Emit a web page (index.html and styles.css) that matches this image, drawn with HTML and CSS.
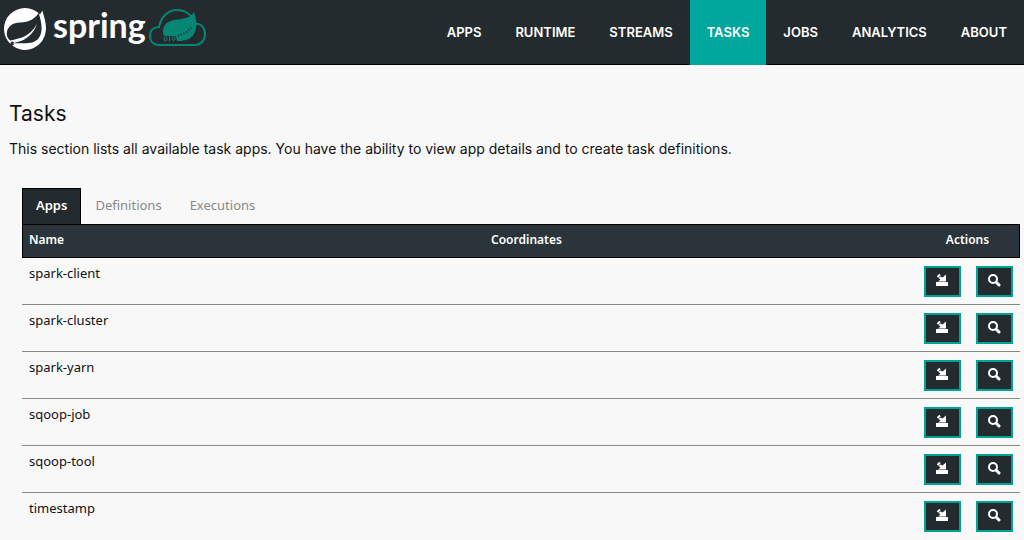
FILE: index.html
```html
<!DOCTYPE html>
<html lang="en">

<head>
    <meta charset="UTF-8">
    <meta name="viewport" content="width=device-width, initial-scale=1.0">
    <title>Tasks</title>
    <link rel="stylesheet" href="styles.css">
</head>

<body>
    <!-- shared icons -->
    <svg class="sprite" aria-hidden="true">
        <symbol id="icon-launch" viewBox="0 0 14 14">
            <path d="M1 9h12v4H1z M3 8.500L5.500 6.500 3.500 5 5.500 3.500 7.500 4.500 11 1.500V8.500z" />
            <path d="M2.500 4L5 1.500" fill="none" stroke="currentColor" stroke-width="2" />
        </symbol>
        <symbol id="icon-search" viewBox="0 0 14 14">
            <circle cx="6" cy="6" r="4" fill="none" stroke="currentColor" stroke-width="2" />
            <path d="M9.500 9.500l2.500 2.500" stroke="currentColor" stroke-width="3" stroke-linecap="round" />
        </symbol>
    </svg>

    <header class="navbar">
        <a class="brand" href="#" aria-label="spring">
            <svg width="210" height="56" viewBox="0 0 210 56">
                <path transform="translate(4 8) scale(1.75)" fill="#fff" d="M21.8537 1.4158a10.4504 10.4504 0 0 1-1.284 2.2471A11.9666 11.9666 0 1 0 3.8518 20.7757l.4445.3951a11.9543 11.9543 0 0 0 19.6316-8.2971c.3457-3.0126-.568-6.8649-2.0742-11.458zM5.5805 20.8745a1.0174 1.0174 0 1 1-.1482-1.4323 1.0396 1.0396 0 0 1 .1482 1.4323zm14.1991-3.5806c-2.9385 3.9013-9.2494 2.5928-13.2763 2.8149 0 0-.7163.0395-1.4323.158 0 0 .2716-.1235.6174-.247 2.8397-.9877 4.1732-1.1853 5.9018-2.0742 3.2349-1.6545 6.4698-5.2844 7.1118-9.0379-1.2347 3.6053-4.9881 6.7165-8.3959 7.9759-2.3459.8643-6.5685 1.7039-6.5685 1.7039l-.1729-.0988c-2.8645-1.4076-2.9632-7.6304 2.2718-9.6306 2.2964-.889 4.4696-.395 6.9637-.9877 2.6422-.6174 5.7042-2.5929 6.939-5.1855 1.3829 4.1732 3.062 10.643.0493 14.6087z" />
                <text class="brand-text" x="53" y="38">spring</text>
                <path d="M159 45c-6 0-9-4-9-9 0-6 4-9 9-9 2-10 9-17 18-17 8 0 14 3 18 14 6-1 10 4 10 10s-4 11-10 11z" fill="none" stroke="#068675" stroke-width="2" />
                <path d="M194 12c5 14 2 25-8 28-3 1-6 1-9 1l-1-5-12 0c-3-8 1-14 10-16 9-1 17-2 20-8z" fill="#068675" />
                <!-- binary digits on the leaf edge -->
                <g fill="none" stroke="#068675">
                    <ellipse cx="165.500" cy="39" rx="1.500" ry="2" />
                    <path d="M169.500 36.500v5" />
                    <ellipse cx="173.500" cy="38.500" rx="1.500" ry="2" />
                </g>
                <path d="M178 36c5-2 10-4 14-9" fill="none" stroke="#242b2e" stroke-width="2" stroke-dasharray="1 2" />
            </svg>
        </a>
        <nav class="menu">
            <a href="#">APPS</a>
            <a href="#">RUNTIME</a>
            <a href="#">STREAMS</a>
            <a href="#" class="active">TASKS</a>
            <a href="#">JOBS</a>
            <a href="#">ANALYTICS</a>
            <a href="#">ABOUT</a>
        </nav>
    </header>

    <main class="content">
        <h1>Tasks</h1>
        <p>This section lists all available task apps. You have the ability to view app details and to create task definitions.</p>

        <section class="panel">
            <nav class="tabs">
                <a href="#" class="active">Apps</a>
                <a href="#">Definitions</a>
                <a href="#">Executions</a>
            </nav>
            <table class="apps">
                <thead>
                    <tr>
                        <th class="name">Name</th>
                        <th>Coordinates</th>
                        <th class="actions">Actions</th>
                    </tr>
                </thead>
                <tbody>
                    <tr>
                        <td>spark-client</td>
                        <td></td>
                        <td class="actions"><div class="buttons">
                            <button type="button" aria-label="Launch"><svg><use href="#icon-launch" /></svg></button>
                            <button type="button" aria-label="Details"><svg><use href="#icon-search" /></svg></button>
                        </div></td>
                    </tr>
                    <tr>
                        <td>spark-cluster</td>
                        <td></td>
                        <td class="actions"><div class="buttons">
                            <button type="button" aria-label="Launch"><svg><use href="#icon-launch" /></svg></button>
                            <button type="button" aria-label="Details"><svg><use href="#icon-search" /></svg></button>
                        </div></td>
                    </tr>
                    <tr>
                        <td>spark-yarn</td>
                        <td></td>
                        <td class="actions"><div class="buttons">
                            <button type="button" aria-label="Launch"><svg><use href="#icon-launch" /></svg></button>
                            <button type="button" aria-label="Details"><svg><use href="#icon-search" /></svg></button>
                        </div></td>
                    </tr>
                    <tr>
                        <td>sqoop-job</td>
                        <td></td>
                        <td class="actions"><div class="buttons">
                            <button type="button" aria-label="Launch"><svg><use href="#icon-launch" /></svg></button>
                            <button type="button" aria-label="Details"><svg><use href="#icon-search" /></svg></button>
                        </div></td>
                    </tr>
                    <tr>
                        <td>sqoop-tool</td>
                        <td></td>
                        <td class="actions"><div class="buttons">
                            <button type="button" aria-label="Launch"><svg><use href="#icon-launch" /></svg></button>
                            <button type="button" aria-label="Details"><svg><use href="#icon-search" /></svg></button>
                        </div></td>
                    </tr>
                    <tr>
                        <td>timestamp</td>
                        <td></td>
                        <td class="actions"><div class="buttons">
                            <button type="button" aria-label="Launch"><svg><use href="#icon-launch" /></svg></button>
                            <button type="button" aria-label="Details"><svg><use href="#icon-search" /></svg></button>
                        </div></td>
                    </tr>
                </tbody>
            </table>
        </section>
    </main>
</body>

</html>
```
FILE: styles.css
```css
* {
    box-sizing: border-box;
}

body {
    margin: 0;
    background-color: #f8f8f8;
    color: #111;
    font: 13px/20px Inter, sans-serif;
}

a {
    color: inherit;
    text-decoration: none;
}

.sprite {
    display: none;
}

/* header */
.navbar {
    display: flex;
    height: 65px;
    background-color: #242b2e;
    color: #fff;
}

.brand {
    flex: 1;
    border-bottom: 1px solid #000;
}

.brand-text {
    fill: #fff;
    font-family: Lato, sans-serif;
    font-size: 34px;
    font-weight: 700;
}

.menu {
    display: flex;
}

.menu a {
    padding: 0 17px;
    border-bottom: 1px solid #000;
    font-weight: 600;
    line-height: 64px;
}

.menu .active {
    background-color: #00a79d;
    border-color: #00a79d;
}

/* content */
.content {
    padding: 36px 4px 0 9px;
}

h1 {
    margin: 0 0 12px;
    font-size: 21px;
    font-weight: 400;
    line-height: 26px;
}

p {
    margin: 0;
    font-size: 14px;
}

.panel {
    margin: 29px 0 0 13px;
    font-family: "Noto Sans", sans-serif;
}

.tabs {
    display: flex;
    color: #888;
}

.tabs a {
    padding: 7px 14px 9px;
}

.tabs .active {
    padding: 6px 13px 9px;
    background-color: #242b2e;
    border: 1px solid #000;
    border-bottom: 0;
    color: #fff;
    font-weight: 600;
}

/* table */
.apps {
    width: 100%;
    border-collapse: separate;
    border-spacing: 0;
    table-layout: fixed;
}

th {
    height: 34px;
    padding: 0 6px 2px;
    background-color: #2b343a;
    border: solid #000;
    border-width: 1px 0;
    font-size: 12px;
    font-weight: 600;
    text-align: left;
    color: #fff;
}

th:first-child {
    border-left-width: 1px;
}

th:last-child {
    border-right-width: 1px;
}

td {
    height: 47px;
    padding: 5px 7px;
    border-bottom: 1px solid #888;
    vertical-align: top;
}

tr:last-child td {
    border-bottom: 0;
}

.name {
    width: 46.4%;
}

.actions {
    width: 104px;
}

th.actions {
    text-align: center;
}

td.actions {
    padding: 8px 7px 0 8px;
}

.buttons {
    display: flex;
    justify-content: space-between;
}

button {
    display: flex;
    align-items: center;
    justify-content: center;
    width: 37px;
    height: 31px;
    padding: 0 2px 4px 0;
    background-color: #242b2e;
    border: 2px solid #00a294;
    color: #fff;
}

button svg {
    width: 14px;
    height: 14px;
    fill: currentColor;
}
```
